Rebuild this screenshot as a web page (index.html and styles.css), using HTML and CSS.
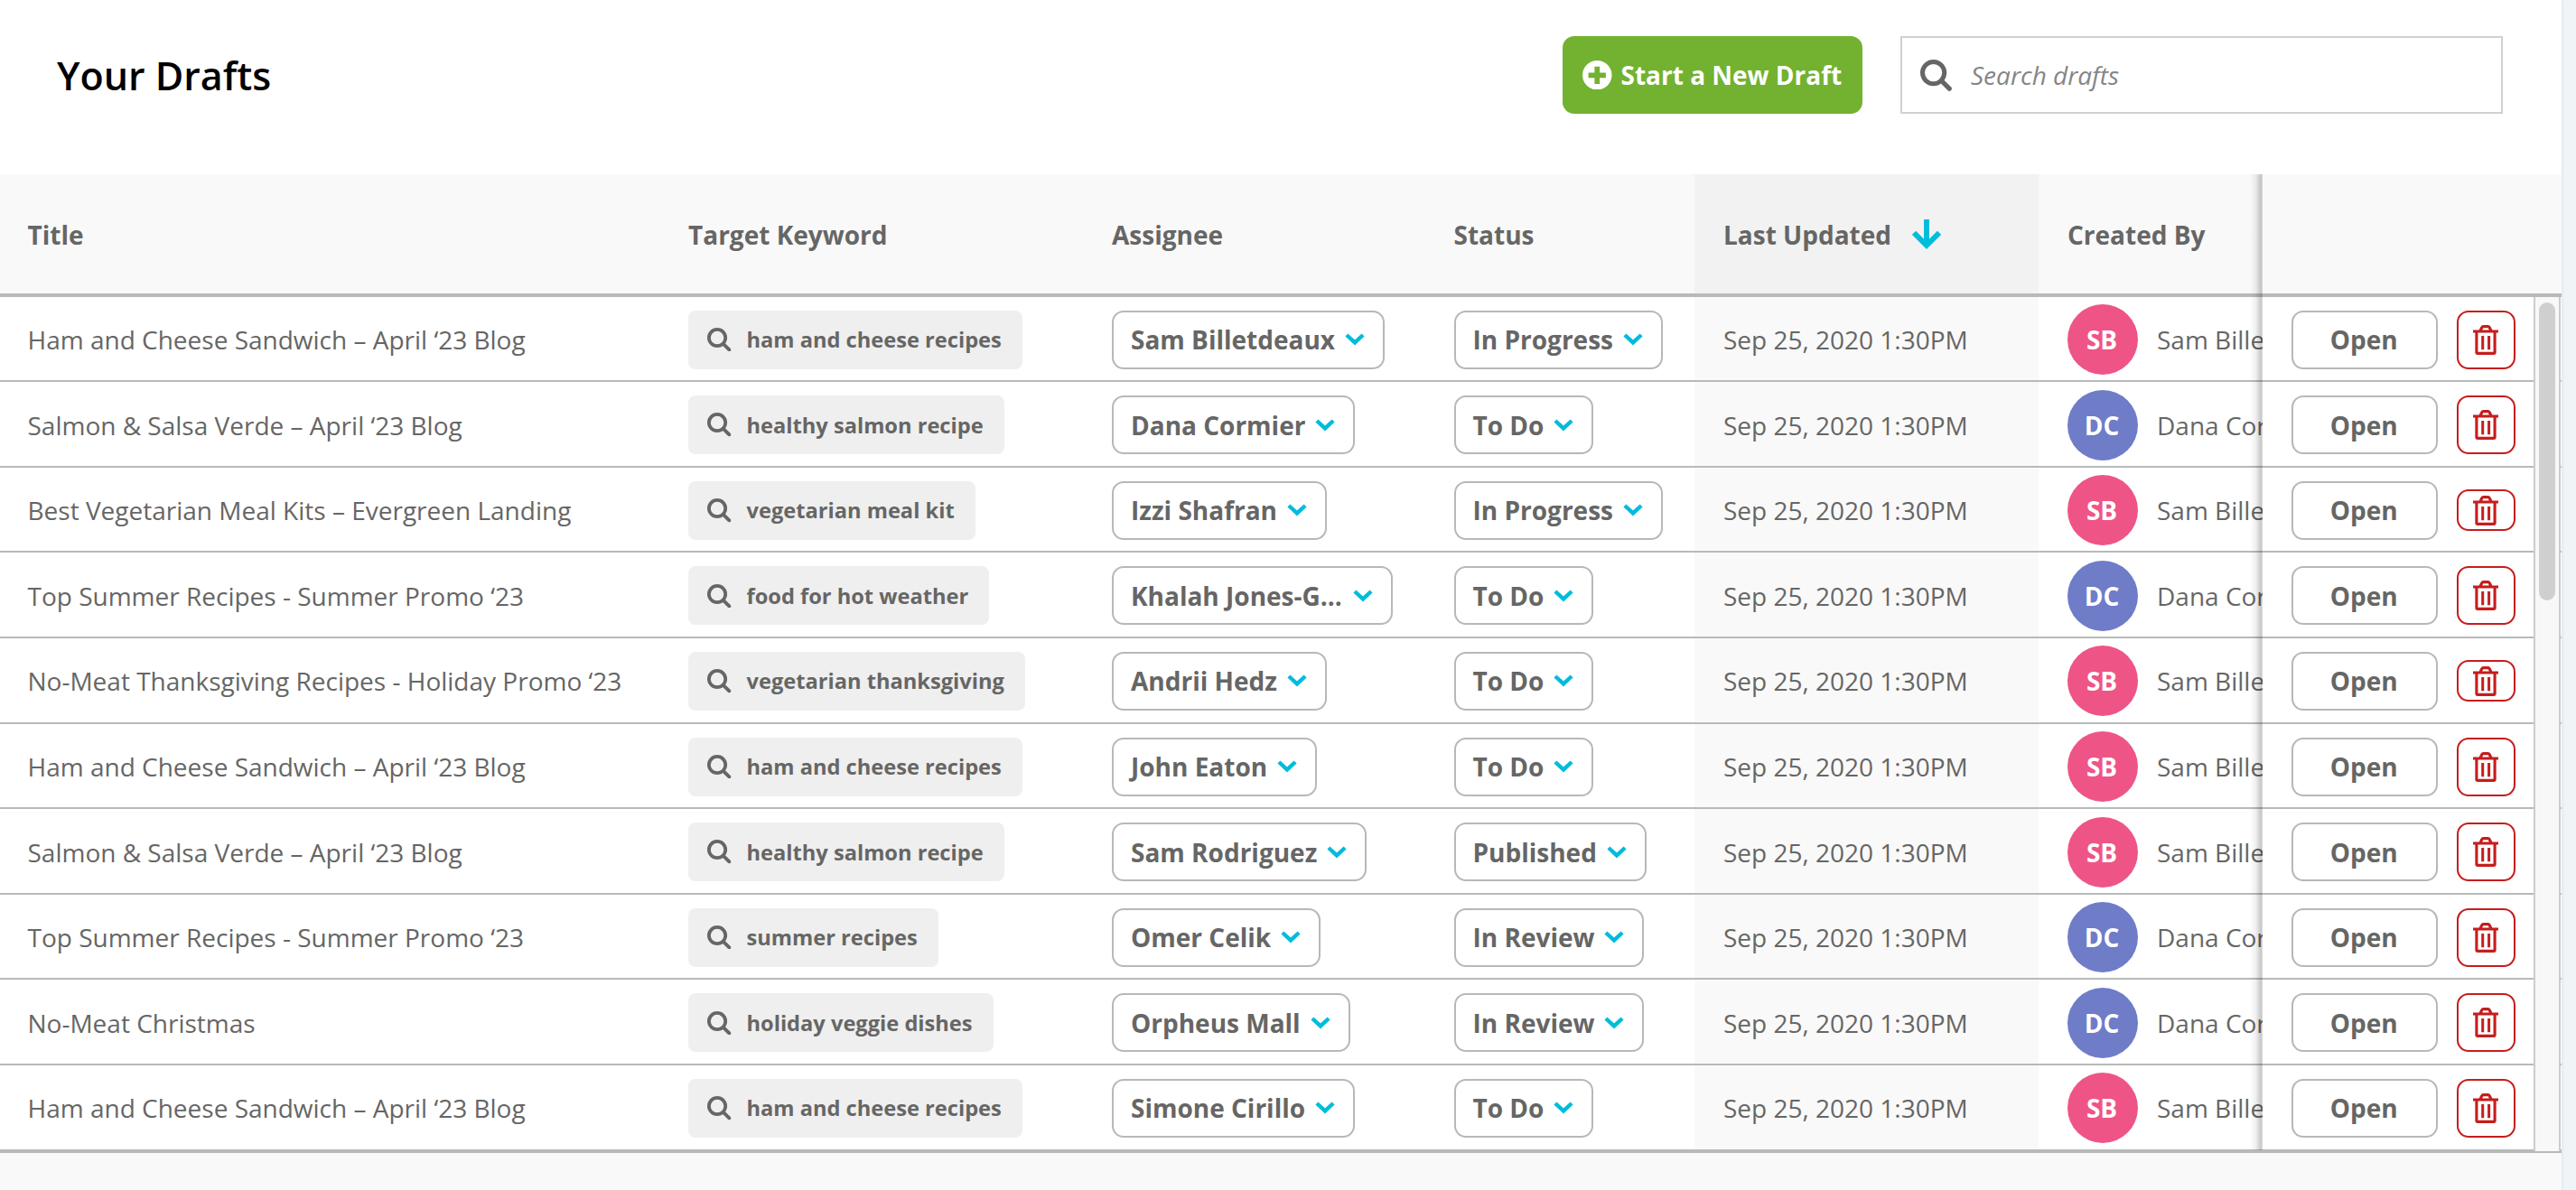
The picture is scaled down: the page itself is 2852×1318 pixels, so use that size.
FILE: index.html
```html
<!DOCTYPE html>
<html lang="en">
<head>
  <meta charset="UTF-8" />
  <meta name="viewport" content="width=device-width, initial-scale=1.0"/>
  <title>Your Drafts</title>
  <link rel="stylesheet" href="styles.css">
</head>
<body>
  <!-- icons -->
  <svg class="sprite" aria-hidden="true">
    <symbol id="icon-search" viewBox="0 0 35 35">
      <circle cx="14.6" cy="14.6" r="12.1" fill="none" stroke="currentColor" stroke-width="5"/>
      <path d="M23.5 23.5 32.2 32.2" fill="none" stroke="currentColor" stroke-width="5.2" stroke-linecap="round"/>
    </symbol>
    <symbol id="icon-chevron" viewBox="0 0 22 14">
      <path d="M1.9 2 11 10.4 20.1 2" fill="none" stroke="currentColor" stroke-width="4.4"/>
    </symbol>
    <symbol id="icon-trash" viewBox="0 0 28 33">
      <path d="M0 7H28M3.9 7V30.2Q3.9 31.4 5.1 31.4H22.9Q24.1 31.4 24.1 30.2V7M8 6.5 9.6 3Q10.2 1.6 11.6 1.6H16.4Q17.8 1.6 18.4 3L20 6.5" fill="none" stroke="currentColor" stroke-width="3.1"/>
      <path d="M10.7 12V27.2M17.6 12V27.2" fill="none" stroke="currentColor" stroke-width="3"/>
    </symbol>
  </svg>

  <main class="page">
    <header class="toolbar">
      <h1>Your Drafts</h1>
      <button class="btn-new">
        <svg viewBox="0 0 32 32"><circle cx="16" cy="16" r="16" fill="#fff"/><path d="M16 9.4V22.8M9.3 16.1H22.7" stroke="#73b130" stroke-width="5.6" stroke-linecap="square"/></svg>
        Start a New Draft
      </button>
      <label class="search">
        <svg><use href="#icon-search"/></svg>
        <input type="text" placeholder="Search drafts">
      </label>
    </header>

    <section class="table">
      <div class="row head">
        <div class="cell">Title</div>
        <div class="cell">Target Keyword</div>
        <div class="cell">Assignee</div>
        <div class="cell">Status</div>
        <div class="cell sorted">Last Updated
          <svg class="arrow" viewBox="0 0 32 33"><path d="M16 0V28M2 14.8 16 28.8 30 14.8" fill="none" stroke="currentColor" stroke-width="5.9"/></svg>
        </div>
        <div class="cell">Created By</div>
        <div class="cell"></div>
      </div>

      <div class="row">
        <div class="cell">Ham and Cheese Sandwich – April ‘23 Blog</div>
        <div class="cell"><span class="keyword"><svg><use href="#icon-search"/></svg>ham and cheese recipes</span></div>
        <div class="cell"><button class="select"><span>Sam Billetdeaux</span><svg><use href="#icon-chevron"/></svg></button></div>
        <div class="cell"><button class="select"><span>In Progress</span><svg><use href="#icon-chevron"/></svg></button></div>
        <div class="cell sorted">Sep 25, 2020 1:30PM</div>
        <div class="cell"><span class="avatar pink">SB</span><span class="name">Sam Billetdeaux</span></div>
        <div class="cell actions"><button class="btn-open">Open</button><button class="btn-delete"><svg><use href="#icon-trash"/></svg></button></div>
      </div>

      <div class="row">
        <div class="cell">Salmon &amp; Salsa Verde – April ‘23 Blog</div>
        <div class="cell"><span class="keyword"><svg><use href="#icon-search"/></svg>healthy salmon recipe</span></div>
        <div class="cell"><button class="select"><span>Dana Cormier</span><svg><use href="#icon-chevron"/></svg></button></div>
        <div class="cell"><button class="select"><span>To Do</span><svg><use href="#icon-chevron"/></svg></button></div>
        <div class="cell sorted">Sep 25, 2020 1:30PM</div>
        <div class="cell"><span class="avatar blue">DC</span><span class="name">Dana Cormier</span></div>
        <div class="cell actions"><button class="btn-open">Open</button><button class="btn-delete"><svg><use href="#icon-trash"/></svg></button></div>
      </div>

      <div class="row">
        <div class="cell">Best Vegetarian Meal Kits – Evergreen Landing</div>
        <div class="cell"><span class="keyword"><svg><use href="#icon-search"/></svg>vegetarian meal kit</span></div>
        <div class="cell"><button class="select"><span>Izzi Shafran</span><svg><use href="#icon-chevron"/></svg></button></div>
        <div class="cell"><button class="select"><span>In Progress</span><svg><use href="#icon-chevron"/></svg></button></div>
        <div class="cell sorted">Sep 25, 2020 1:30PM</div>
        <div class="cell"><span class="avatar pink">SB</span><span class="name">Sam Billetdeaux</span></div>
        <div class="cell actions"><button class="btn-open">Open</button><button class="btn-delete short"><svg><use href="#icon-trash"/></svg></button></div>
      </div>

      <div class="row">
        <div class="cell">Top Summer Recipes - Summer Promo ‘23</div>
        <div class="cell"><span class="keyword"><svg><use href="#icon-search"/></svg>food for hot weather</span></div>
        <div class="cell"><button class="select long"><span>Khalah Jones-G...</span><svg><use href="#icon-chevron"/></svg></button></div>
        <div class="cell"><button class="select"><span>To Do</span><svg><use href="#icon-chevron"/></svg></button></div>
        <div class="cell sorted">Sep 25, 2020 1:30PM</div>
        <div class="cell"><span class="avatar blue">DC</span><span class="name">Dana Cormier</span></div>
        <div class="cell actions"><button class="btn-open">Open</button><button class="btn-delete"><svg><use href="#icon-trash"/></svg></button></div>
      </div>

      <div class="row">
        <div class="cell">No-Meat Thanksgiving Recipes - Holiday Promo ‘23</div>
        <div class="cell"><span class="keyword"><svg><use href="#icon-search"/></svg>vegetarian thanksgiving</span></div>
        <div class="cell"><button class="select"><span>Andrii Hedz</span><svg><use href="#icon-chevron"/></svg></button></div>
        <div class="cell"><button class="select"><span>To Do</span><svg><use href="#icon-chevron"/></svg></button></div>
        <div class="cell sorted">Sep 25, 2020 1:30PM</div>
        <div class="cell"><span class="avatar pink">SB</span><span class="name">Sam Billetdeaux</span></div>
        <div class="cell actions"><button class="btn-open">Open</button><button class="btn-delete short"><svg><use href="#icon-trash"/></svg></button></div>
      </div>

      <div class="row">
        <div class="cell">Ham and Cheese Sandwich – April ‘23 Blog</div>
        <div class="cell"><span class="keyword"><svg><use href="#icon-search"/></svg>ham and cheese recipes</span></div>
        <div class="cell"><button class="select"><span>John Eaton</span><svg><use href="#icon-chevron"/></svg></button></div>
        <div class="cell"><button class="select"><span>To Do</span><svg><use href="#icon-chevron"/></svg></button></div>
        <div class="cell sorted">Sep 25, 2020 1:30PM</div>
        <div class="cell"><span class="avatar pink">SB</span><span class="name">Sam Billetdeaux</span></div>
        <div class="cell actions"><button class="btn-open">Open</button><button class="btn-delete"><svg><use href="#icon-trash"/></svg></button></div>
      </div>

      <div class="row">
        <div class="cell">Salmon &amp; Salsa Verde – April ‘23 Blog</div>
        <div class="cell"><span class="keyword"><svg><use href="#icon-search"/></svg>healthy salmon recipe</span></div>
        <div class="cell"><button class="select"><span>Sam Rodriguez</span><svg><use href="#icon-chevron"/></svg></button></div>
        <div class="cell"><button class="select"><span>Published</span><svg><use href="#icon-chevron"/></svg></button></div>
        <div class="cell sorted">Sep 25, 2020 1:30PM</div>
        <div class="cell"><span class="avatar pink">SB</span><span class="name">Sam Billetdeaux</span></div>
        <div class="cell actions"><button class="btn-open">Open</button><button class="btn-delete"><svg><use href="#icon-trash"/></svg></button></div>
      </div>

      <div class="row">
        <div class="cell">Top Summer Recipes - Summer Promo ‘23</div>
        <div class="cell"><span class="keyword"><svg><use href="#icon-search"/></svg>summer recipes</span></div>
        <div class="cell"><button class="select"><span>Omer Celik</span><svg><use href="#icon-chevron"/></svg></button></div>
        <div class="cell"><button class="select"><span>In Review</span><svg><use href="#icon-chevron"/></svg></button></div>
        <div class="cell sorted">Sep 25, 2020 1:30PM</div>
        <div class="cell"><span class="avatar blue">DC</span><span class="name">Dana Cormier</span></div>
        <div class="cell actions"><button class="btn-open">Open</button><button class="btn-delete"><svg><use href="#icon-trash"/></svg></button></div>
      </div>

      <div class="row">
        <div class="cell">No-Meat Christmas</div>
        <div class="cell"><span class="keyword"><svg><use href="#icon-search"/></svg>holiday veggie dishes</span></div>
        <div class="cell"><button class="select"><span>Orpheus Mall</span><svg><use href="#icon-chevron"/></svg></button></div>
        <div class="cell"><button class="select"><span>In Review</span><svg><use href="#icon-chevron"/></svg></button></div>
        <div class="cell sorted">Sep 25, 2020 1:30PM</div>
        <div class="cell"><span class="avatar blue">DC</span><span class="name">Dana Cormier</span></div>
        <div class="cell actions"><button class="btn-open">Open</button><button class="btn-delete"><svg><use href="#icon-trash"/></svg></button></div>
      </div>

      <div class="row last">
        <div class="cell">Ham and Cheese Sandwich – April ‘23 Blog</div>
        <div class="cell"><span class="keyword"><svg><use href="#icon-search"/></svg>ham and cheese recipes</span></div>
        <div class="cell"><button class="select"><span>Simone Cirillo</span><svg><use href="#icon-chevron"/></svg></button></div>
        <div class="cell"><button class="select"><span>To Do</span><svg><use href="#icon-chevron"/></svg></button></div>
        <div class="cell sorted">Sep 25, 2020 1:30PM</div>
        <div class="cell"><span class="avatar pink">SB</span><span class="name">Sam Billetdeaux</span></div>
        <div class="cell actions"><button class="btn-open">Open</button><button class="btn-delete"><svg><use href="#icon-trash"/></svg></button></div>
      </div>

      <div class="pin-shadow"></div>
      <div class="scrollbar"><div class="thumb"></div></div>
    </section>
  </main>
</body>
</html>
```
FILE: styles.css
```css
* {
  box-sizing: border-box;
}
body {
  margin: 0;
  height: 1318px;
  overflow: hidden;
  background: #eff4f6;
  color: #666665;
  font-family: "Open Sans", "Noto Sans", sans-serif;
  font-size: 28px;
}
button, input {
  font: inherit;
  color: inherit;
  margin: 0;
  padding: 0;
}
svg {
  display: block;
  flex-shrink: 0;
}
.sprite {
  display: none;
}
.page {
  width: 2836px;
  height: 1318px;
  background: #f9f9f9;
  box-shadow: 0 0 4px rgba(0, 0, 0, 0.1);
}

/* --- toolbar --- */
.toolbar {
  display: flex;
  align-items: center;
  height: 193px;
  padding: 0 65px 27px 63px;
  background: #fff;
}
.toolbar h1 {
  margin: 0 auto 0 0;
  padding-top: 1px;
  color: #000;
  font-size: 43px;
  font-weight: 600;
  line-height: 60px;
}
.btn-new {
  display: flex;
  align-items: center;
  gap: 10px;
  width: 332px;
  height: 86px;
  margin-right: 42px;
  padding-left: 22px;
  border: 0;
  border-radius: 13px;
  background: #73b130;
  color: #fff;
  font-weight: 700;
  white-space: nowrap;
}
.btn-new svg {
  width: 32.5px;
  height: 32.5px;
}
.search {
  display: flex;
  align-items: center;
  gap: 21px;
  width: 667px;
  height: 86px;
  padding-left: 20px;
  border: 2px solid #d0d0d0;
}
.search svg {
  width: 35px;
  height: 35px;
}
.search input {
  flex: 1;
  border: 0;
  outline: 0;
  background: none;
}
.search input::placeholder {
  color: #858585;
  font-style: italic;
}

/* --- table --- */
.table {
  position: relative;
  background: #fff;
}
.row {
  display: grid;
  grid-template-columns: 730px 469px 378.5px 298.5px 381px 248px 331px;
  height: 94.6px;
  border-bottom: 2px solid #b8b9b9;
}
.row.last {
  height: 96.6px;
  border-bottom-width: 4px;
}
.cell {
  display: flex;
  align-items: center;
  min-width: 0;
  overflow: hidden;
  padding: 2.4px 0 0 32px;
  white-space: nowrap;
}
.cell:first-child {
  padding-left: 30.5px;
}
.sorted {
  background: #f9f9f9;
}
.head {
  height: 135.6px;
  border-bottom-width: 4px;
  background: #f9f9f9;
  font-weight: 700;
}
.head .sorted {
  background: #f2f2f2;
}
.arrow {
  width: 32px;
  height: 33px;
  margin-left: 23px;
  color: #00bcdb;
}
.keyword {
  display: flex;
  align-items: center;
  gap: 17px;
  height: 65px;
  padding: 0 23px 0 21px;
  border-radius: 8px;
  background: #efefef;
  font-size: 23.65px;
  font-weight: 700;
}
.keyword svg {
  width: 26.5px;
  height: 26.5px;
}
.select {
  display: flex;
  align-items: center;
  gap: 11px;
  height: 65px;
  padding: 0 20px 0 19px;
  border: 2px solid #b8b8b8;
  border-radius: 13px;
  background: #fff;
  font-weight: 700;
}
.select.long span {
  width: 235px;
  text-align: left;
}
.select svg {
  width: 22px;
  height: 14px;
  color: #00bcdb;
}
.avatar {
  flex-shrink: 0;
  width: 78px;
  height: 78px;
  margin-right: 21px;
  padding-right: 2px;
  border-radius: 50%;
  color: #fff;
  font-weight: 700;
  line-height: 78px;
  text-align: center;
}
.name {
  flex: 1;
  min-width: 0;
  overflow: hidden;
}
.pink {
  background: #ee5586;
}
.blue {
  background: #6f7cc8;
}
.actions {
  gap: 21px;
}
.btn-open {
  width: 161.5px;
  height: 65px;
  padding-right: 1px;
  border: 2px solid #b8b8b8;
  border-radius: 13px;
  background: #fff;
  font-weight: 700;
}
.btn-delete {
  display: flex;
  align-items: center;
  justify-content: center;
  width: 65px;
  height: 65px;
  border: 2px solid #c61d1d;
  border-radius: 13px;
  background: #fff;
  color: #c61d1d;
}
.btn-delete.short {
  height: 46px;
}
.btn-delete svg {
  width: 28px;
  height: 33px;
}

/* edge of the pinned column */
.pin-shadow {
  position: absolute;
  top: 0;
  bottom: 3px;
  left: 2491px;
  width: 14px;
  background: linear-gradient(90deg, rgba(0, 0, 0, 0), rgba(0, 0, 0, 0.06) 45%, rgba(0, 0, 0, 0.22) 88%, rgba(0, 0, 0, 0.12));
}
.scrollbar {
  position: absolute;
  top: 135.6px;
  bottom: 2px;
  left: 2805px;
  width: 30px;
  padding: 6px 0 0 4px;
  border: solid #ccc;
  border-width: 0 2px;
  background: #f8f8f8;
}
.thumb {
  width: 18px;
  height: 330px;
  border-radius: 9px;
  background: #cfcfcf;
}
```
